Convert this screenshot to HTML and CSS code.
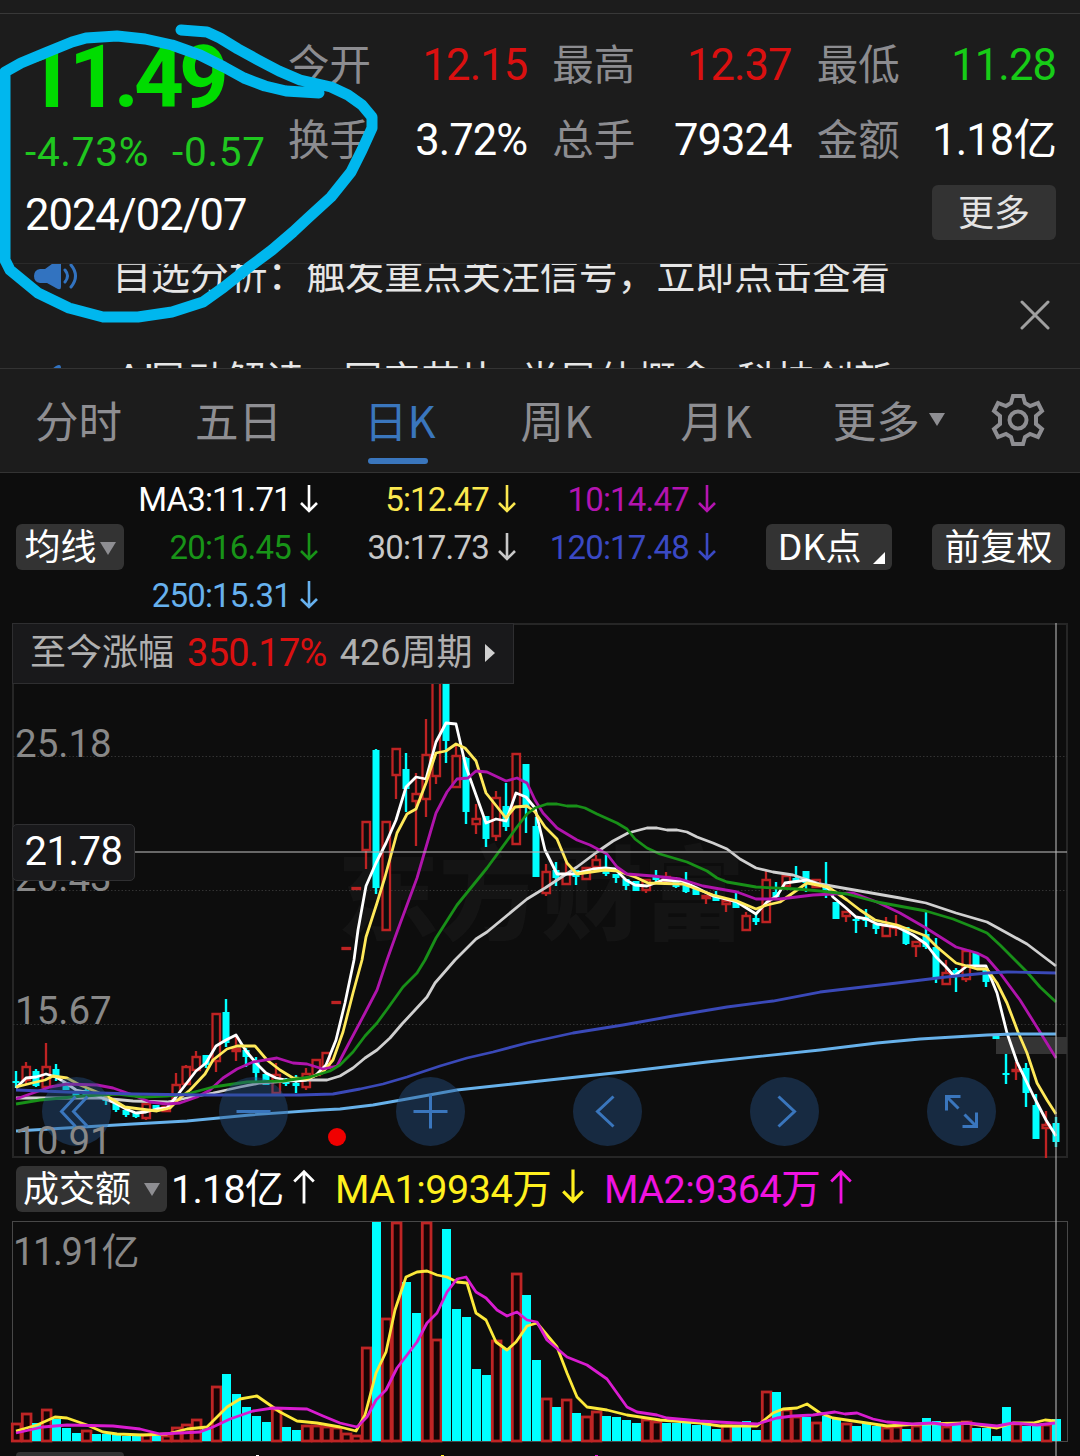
FILE: index.html
```
<!DOCTYPE html>
<html lang="zh-CN">

<head>
    <meta charset="UTF-8">
    <meta name="viewport" content="width=device-width, initial-scale=1.0">
    <title>日K</title>
    <link rel="stylesheet" href="styles.css">
</head>

<body>
    <div class="top-line"></div>

    <section class="quote">
        <div class="quote-main">
            <div class="price">11.49</div>
            <div class="change"><span>-4.73%</span><span>-0.57</span></div>
            <div class="date">2024/02/07</div>
        </div>
        <div class="quote-side">
            <div class="stats">
                <div class="stat"><span class="label">今开</span><span class="value up">12.15</span></div>
                <div class="stat"><span class="label">最高</span><span class="value up">12.37</span></div>
                <div class="stat"><span class="label">最低</span><span class="value down">11.28</span></div>
                <div class="stat"><span class="label">换手</span><span class="value">3.72%</span></div>
                <div class="stat"><span class="label">总手</span><span class="value">79324</span></div>
                <div class="stat"><span class="label">金额</span><span class="value">1.18亿</span></div>
            </div>
            <button class="more">更多</button>
        </div>
    </section>

    <section class="ticker">
        <div class="ticker-list">
            <div class="ticker-row">
                <svg class="speaker" width="44" height="36" viewBox="0 0 44 36">
                    <path d="M6 10h5l11-8q5-3 5 2v24q0 4-5 1l-9-5H6q-6-1-6-7t6-7z" fill="#3273c0"/>
                    <path d="M31 11q5 6 0 12M37 6q9 11 0 22" fill="none" stroke="#3273c0" stroke-width="3" stroke-linecap="round"/>
                </svg>
                <span class="text">自选分析：触发重点关注信号，立即点击查看</span>
            </div>
            <div class="ticker-row">
                <svg class="speaker" width="44" height="36" viewBox="0 0 44 36">
                    <path d="M6 10h5l11-8q5-3 5 2v24q0 4-5 1l-9-5H6q-6-1-6-7t6-7z" fill="#3273c0"/>
                </svg>
                <span class="text spaced"><span class="latin">AI</span>异动解读：国产芯片 半导体概念 科技创新</span>
            </div>
        </div>
        <svg class="close" width="30" height="30" viewBox="0 0 30 30">
            <path d="M2 2L28 28M28 2L2 28" stroke="#a0a0a0" stroke-width="3" stroke-linecap="round"/>
        </svg>
    </section>

    <nav class="tabs">
        <span class="tab">分时</span>
        <span class="tab">五日</span>
        <span class="tab active">日K</span>
        <span class="tab">周K</span>
        <span class="tab">月K</span>
        <span class="tab">更多<i class="caret"></i></span>
        <svg class="gear" width="54" height="54" viewBox="-27 -27 54 54" fill="none" stroke="#8e8e92" stroke-width="4">
            <path d="M-5-24H5L7-17L12-14L20-17L24-9L18-4V4L24 9L20 17L12 14L7 17L5 24H-5L-7 17L-12 14L-20 17L-24 9L-18 4V-4L-24-9L-20-17L-12-14L-7-17Z"/>
            <circle r="8.5"/>
        </svg>
    </nav>

    <section class="ma-bar">
        <button class="chip ma-type">均线<i class="caret"></i></button>
        <div class="ma-grid">
            <span class="ma3">MA3:11.71<svg class="arrow"><use href="#down"/></svg></span>
            <span class="ma5">5:12.47<svg class="arrow"><use href="#down"/></svg></span>
            <span class="ma10">10:14.47<svg class="arrow"><use href="#down"/></svg></span>
            <span class="ma20">20:16.45<svg class="arrow"><use href="#down"/></svg></span>
            <span class="ma30">30:17.73<svg class="arrow"><use href="#down"/></svg></span>
            <span class="ma120">120:17.48<svg class="arrow"><use href="#down"/></svg></span>
            <span class="ma250">250:15.31<svg class="arrow"><use href="#down"/></svg></span>
        </div>
        <button class="chip dk">DK点<i class="corner"></i></button>
        <button class="chip adjust">前复权</button>
    </section>

    <div class="charts">
        <section class="price-chart">
            <svg id="price" width="1080" height="535" viewBox="0 623 1080 535"></svg>
            <div class="range-tip">
                <span>至今涨幅</span><span class="up">350.17%</span><span>426周期</span><i class="play"></i>
            </div>
            <div class="cursor-price">21.78</div>
        </section>

        <div class="vol-head">
            <button class="chip vol-type">成交额<i class="caret"></i></button>
            <span class="vol-now">1.18亿<svg class="arrow big"><use href="#up"/></svg></span>
            <span class="vol-ma1">MA1:9934万<svg class="arrow big"><use href="#down"/></svg></span>
            <span class="vol-ma2">MA2:9364万<svg class="arrow big"><use href="#up"/></svg></span>
        </div>

        <svg id="volume" width="1080" height="224" viewBox="0 1220 1080 224"></svg>

        <div class="next-head">
            <div class="next-chip"></div>
            <i class="tick white"></i><i class="tick yellow"></i><i class="tick pink"></i>
        </div>
        <div class="crosshair"></div>
    </div>

    <!-- hand-drawn marker -->
    <svg class="marker" width="400" height="340" viewBox="0 0 400 340">
        <path d="M181 30L207 32L220 38L238 49L258 60L279 71L300 80L331 87L348 95L362 105L372 117L372 128L362 150L351 172L331 197L308 218L293 232L272 250L248 268L224 287L203 302L172 312L138 317L103 317L69 308L38 293L10 270L5 260V72L21 63L45 53L72 42L86 38L117 36L145 39L172 45L200 55L224 67L244 78L265 86L286 91L319 93"/>
    </svg>

    <!-- shared arrows -->
    <svg class="defs">
        <symbol id="down" viewBox="0 0 18 28"><path d="M9 0V26M1 18L9 26L17 18" fill="none" stroke="currentColor" stroke-width="2.6"/></symbol>
        <symbol id="up" viewBox="0 0 18 28"><path d="M9 28V2M1 10L9 2L17 10" fill="none" stroke="currentColor" stroke-width="2.3"/></symbol>
    </svg>

    <script src="chart.js"></script>
</body>

</html>
```

FILE: styles.css
```
* {
    box-sizing: border-box;
}

body {
    margin: 0;
    width: 1080px;
    height: 1456px;
    overflow: hidden;
    position: relative;
    background: #1c1c1c;
    color: #fff;
    font-family: "Noto Sans CJK SC", sans-serif;
}

button {
    border: 0;
    padding: 0;
    font-family: inherit;
    color: #fff;
}

svg {
    display: block;
    flex: none;
}

i {
    display: block;
}

.defs {
    position: absolute;
    width: 0;
    height: 0;
}

/* numbers */

.quote-main,
.value,
.ma-grid,
.range-tip,
.cursor-price,
.vol-head span,
.latin,
.axis {
    font-family: Roboto, "Noto Sans CJK SC", sans-serif;
}

.up {
    color: #da1010;
}

.down {
    color: #17cc17;
}

.top-line {
    height: 14px;
    border-bottom: 1px solid #383838;
}

/* quote */

.quote {
    display: flex;
    height: 249px;
    padding: 0 24px 0 25px;
}

.quote-main {
    width: 263px;
    white-space: nowrap;
}

.price {
    margin: 27px 0 0 -1px;
    font-size: 87px;
    line-height: 72px;
    font-weight: 700;
    letter-spacing: -5px;
    color: #00dc00;
}

.change {
    display: flex;
    gap: 23px;
    margin-top: 16px;
    font-size: 40.5px;
    line-height: 47px;
    letter-spacing: .7px;
    color: #1fc71f;
}

.date {
    margin-top: 15px;
    font-size: 43.5px;
    line-height: 50px;
    letter-spacing: -1px;
}

.quote-side {
    flex: 1;
    padding-top: 10px;
    display: flex;
    flex-direction: column;
    align-items: flex-end;
}

.stats {
    width: 100%;
    display: grid;
    grid-template-columns: repeat(3, 1fr);
    column-gap: 25px;
}

.stat {
    display: flex;
    justify-content: space-between;
    height: 75px;
}

.stat .label {
    font-size: 41.5px;
    line-height: 77px;
    color: #8c8c90;
}

.stat .value {
    padding-top: 8px;
    font-size: 43.5px;
    line-height: 68px;
    letter-spacing: -.9px;
}

.more {
    width: 124px;
    height: 55px;
    margin-top: 11px;
    padding-bottom: 4px;
    border-radius: 6px;
    background: #333;
    color: #e4e4e4;
    font-size: 36px;
    line-height: 51px;
}

/* ticker */

.ticker {
    height: 105px;
    border-top: 1px solid #2a2a2a;
    display: flex;
    justify-content: space-between;
    padding: 0 30px 0 34px;
    overflow: hidden;
}

.ticker-row {
    display: flex;
    align-items: flex-start;
    height: 105px;
    font-size: 38.9px;
    line-height: 56px;
    color: #e6e6e6;
    white-space: nowrap;
    margin-top: -20px;
    margin-bottom: 20px;
}

.ticker-row .text {
    margin-left: 34px;
}

.ticker-row .spaced {
    margin-left: 37px;
    word-spacing: 13px;
}

.latin {
    display: inline-block;
    font-size: 43px;
    width: 34px;
}

.speaker {
    margin-top: 15px;
}

.close {
    margin-top: 36px;
}

/* tabs */

.tabs {
    height: 105px;
    border-top: 1px solid #333;
    border-bottom: 1px solid #333;
    display: flex;
    padding-left: 35px;
    font-size: 43.5px;
    line-height: 101px;
    color: #8e8e92;
}

.tab {
    margin-right: 73px;
    display: flex;
    position: relative;
    white-space: nowrap;
}

.tab:nth-child(2) {
    margin-right: 82px;
}

.tab:nth-child(3) {
    margin-right: 85px;
}

.tab:nth-child(4) {
    margin-right: 88px;
}

.tab:nth-child(5) {
    margin-right: 81px;
}

.tab:nth-child(6) {
    margin-right: 46px;
}

.tab.active {
    color: #3a76bd;
}

.tab.active::after {
    content: "";
    position: absolute;
    left: 4px;
    bottom: 8px;
    width: 60px;
    height: 6px;
    border-radius: 3px;
    background: #3a76bd;
}

.caret {
    border: 8px solid transparent;
    border-top: 13px solid #8e8e92;
    border-bottom: 0;
}

.tab .caret {
    margin: 44px 0 0 9px;
}

.gear {
    margin-top: 24px;
}

/* moving averages */

.ma-bar {
    height: 150px;
    background: #0d0d0d;
    display: flex;
    align-items: flex-start;
    padding-left: 16px;
}

.chip {
    height: 46px;
    border-radius: 6px;
    background: #333;
    font-size: 36px;
    line-height: 41px;
    padding-bottom: 5px;
    display: flex;
    justify-content: center;
    white-space: nowrap;
}

.ma-bar .chip {
    margin-top: 51px;
}

.ma-type {
    width: 108px;
}

.ma-type .caret {
    margin: 18px 0 0 3px;
}

.ma-grid {
    display: grid;
    grid-template-columns: 194px 198px 200px;
    padding-top: 3px;
    font-size: 33px;
    line-height: 48px;
    letter-spacing: -.8px;
    width: 642px;
}

.ma-grid span {
    display: flex;
    justify-content: flex-end;
    white-space: nowrap;
}

.arrow {
    width: 18px;
    height: 28px;
    margin: 9px 0 0 9px;
}

.arrow.big {
    width: 22px;
    height: 35px;
    margin: 8px 0 0 auto;
}

.ma3 { color: #fff; }
.ma5 { color: #fbe84f; }
.ma10 { color: #b414b0; }
.ma20 { color: #189418; }
.ma30 { color: #c8c8c8; }
.ma120 { color: #3a49c4; }
.ma250 { color: #67b1ee; }

.dk {
    width: 126px;
    padding-left: 4px;
}

.corner {
    margin: 28px 0 0 11px;
    border-left: 12px solid transparent;
    border-bottom: 12px solid #fff;
    height: 0;
}

.adjust {
    width: 133px;
    margin-left: 40px;
}

/* charts */

.charts {
    background: #0d0d0d;
    height: 833px;
    position: relative;
}

.price-chart {
    position: relative;
}

.range-tip {
    position: absolute;
    left: 12px;
    top: 0;
    width: 502px;
    height: 61px;
    padding-left: 17px;
    border: 1px solid #2e2e30;
    background: #19191b;
    color: #b0b0b0;
    display: flex;
    font-size: 36px;
    line-height: 59px;
}

.range-tip span {
    margin-right: 13px;
    white-space: nowrap;
}

.range-tip .up {
    font-size: 38px;
    letter-spacing: -.7px;
}

.play {
    margin-top: 20px;
    height: 18px;
    border: 9px solid transparent;
    border-left: 10px solid #d0d0d0;
    border-right: 0;
}

.cursor-price {
    position: absolute;
    left: 12px;
    top: 201px;
    width: 123px;
    height: 57px;
    border: 1px solid #303032;
    border-radius: 5px;
    background: #19191b;
    font-size: 40px;
    line-height: 54px;
    letter-spacing: -.5px;
    text-align: center;
}

.vol-head {
    display: flex;
    height: 62px;
    padding: 0 0 0 16px;
}

.vol-head span {
    display: flex;
    padding-top: 3px;
    margin-right: 20px;
    font-size: 39.5px;
    line-height: 57px;
    letter-spacing: -.5px;
    white-space: nowrap;
}

.vol-type {
    width: 151px;
    margin: 8px 4px 0 0;
}

.vol-type .caret {
    margin: 17px 0 0 13px;
}

.vol-head .vol-now {
    width: 144px;
    letter-spacing: -.8px;
}

.vol-ma1 {
    width: 249px;
    color: #fff01e;
}

.vol-ma2 {
    width: 248px;
    color: #f012e0;
}

.next-head {
    display: flex;
    align-items: flex-end;
    height: 12px;
    padding-left: 16px;
}

.next-chip {
    width: 108px;
    height: 4px;
    border-radius: 6px 6px 0 0;
    background: #333;
}

.tick {
    width: 3px;
    height: 1px;
    margin-left: 132px;
}

.tick.white { background: #fff; }
.tick.yellow { background: #fff01e; margin-left: 182px; }
.tick.pink { background: #f012e0; margin-left: 151px; }

.crosshair {
    position: absolute;
    left: 1055px;
    top: 0;
    width: 2px;
    height: 833px;
    background: #b4b4b4;
    opacity: .55;
}

.marker {
    position: absolute;
    left: 0;
    top: 0;
    fill: none;
    stroke: #00b7ee;
    stroke-width: 11;
    stroke-linejoin: round;
    stroke-linecap: round;
}

/* svg parts */

.frame { fill: none; stroke: #262626; stroke-width: 2; }
.vol-frame { fill: none; stroke: #484848; stroke-width: 1; }
.grid { stroke: #333; stroke-dasharray: 1.5 2; }
.axis { fill: #888; font-size: 38.5px; }
.axis.small { font-size: 38px; letter-spacing: -1.4px; }
.watermark { fill: #141414; font-size: 102px; font-weight: 900; }
.rise { fill: #0d0d0d; stroke: #be2323; stroke-width: 2.3; }
.fall { fill: #00ffff; }
.vol-rise { fill: #170404; stroke: #be2525; stroke-width: 2.8; }
.line { fill: none; stroke-width: 2.8; stroke-linejoin: round; }
.tool circle { fill: #25538a; fill-opacity: .42; }
.tool path { fill: none; stroke: #3a76bd; stroke-width: 3; }
```

FILE: chart.js
```
// y values are screen pixels, one column every 10px starting at x = 16
// candle: direction, high, body top, body bottom, low
const candles = `
f 1071 1081 1083 1088,r 1062 1067 1080 1084,f 1069 1071 1086 1087,r 1043 1067 1087 1087,f 1064 1069 1076 1081,
f 1082 1082 1090 1090,f 1093 1093 1096 1099,f 1088 1090 1096 1097,f 1092 1092 1097 1098,f 1096 1096 1101 1105,
f 1103 1103 1110 1112,f 1110 1110 1115 1117,f 1113 1113 1117 1118,r 1104 1104 1118 1120,f 1105 1105 1109 1109,
r 1107 1107 1111 1111,r 1073 1085 1100 1100,r 1065 1067 1084 1084,r 1051 1057 1070 1072,f 1055 1055 1065 1068,
r 1014 1014 1061 1072,f 999 1012 1043 1047,r 1036 1049 1051 1061,f 1048 1050 1057 1067,f 1057 1062 1073 1081,
f 1074 1074 1085 1085,r 1063 1075 1093 1093,f 1078 1081 1084 1086,f 1075 1083 1086 1093,r 1068 1074 1087 1090,
r 1060 1060 1075 1075,r 1053 1053 1068 1068,r 1002 1002 1003 1003,r 948 948 949 949,r 888 888 889 889,
r 822 822 850 869,f 749 750 888 894,r 822 822 930 930,r 749 749 775 799,f 753 769 789 812,
r 773 794 801 846,r 719 755 799 817,r 640 640 776 784,f 640 640 741 763,r 746 756 787 787,
f 757 758 812 824,r 804 819 824 834,f 816 816 839 847,r 791 798 836 841,f 783 806 827 831,
r 754 754 844 844,f 764 764 808 833,f 817 826 877 877,r 864 872 893 896,f 862 870 878 886,
r 860 874 884 884,f 870 870 877 885,r 867 868 879 879,r 855 860 867 867,f 855 868 874 876,
f 874 874 878 883,f 879 879 886 890,f 881 881 891 891,r 880 880 890 893,f 870 877 880 883,
r 872 877 881 881,f 877 881 887 888,f 872 882 892 893,f 888 888 895 895,r 895 896 898 904,
f 891 896 901 901,r 900 901 904 912,f 893 902 908 908,r 912 916 930 931,f 915 918 922 925,
r 871 880 922 923,f 882 892 897 897,r 875 876 886 887,f 866 878 882 882,f 871 871 883 892,
r 879 880 887 888,f 862 884 890 898,f 902 902 919 919,r 911 912 916 922,f 917 919 921 933,
f 909 917 921 927,f 924 924 929 934,r 917 926 936 937,r 915 926 928 936,f 927 927 944 945,
r 941 942 946 957,f 912 934 947 949,f 938 947 979 983,r 960 973 984 984,f 968 970 975 992,
r 950 951 979 982,f 952 953 967 967,f 970 970 982 987,f 1036 1036 1039 1039,f 1054 1073 1075 1084,
r 1062 1070 1071 1080,f 1063 1068 1093 1107,f 1094 1105 1139 1139,r 1111 1125 1128 1158,f 1117 1123 1142 1147`;

const volumes = `
r1423 r1413 f1423 r1409 f1419 f1428 f1433 r1430 f1434 f1434 f1434 f1436 f1435 r1434 f1436 r1435 r1427 r1424 r1419 f1429
r1386 f1374 f1394 f1407 f1416 f1422 r1409 f1427 f1430 r1425 r1425 r1426 r1427 r1433 r1435 r1347 f1222 r1318 r1222 f1282
f1313 r1222 r1339 f1229 f1309 f1317 f1369 f1375 r1340 f1348 r1273 f1295 f1360 r1398 f1407 r1399 f1413 r1416 r1411 f1416
f1417 f1420 f1423 r1419 r1421 f1423 f1423 f1422 f1425 f1424 f1429 r1425 f1426 f1421 f1430 r1391 f1392 r1409 r1416 f1417
r1422 f1416 f1419 r1423 f1426 f1423 f1426 r1427 r1426 f1429 r1425 f1418 f1421 r1426 f1425 r1421 f1428 f1428 f1436 f1407
r1423 f1426 f1426 r1424 f1419`;

const priceLines = [
    ['#d0d0d0', '16,1098 100,1098 133,1101 167,1102 187,1098 213,1093 240,1087 260,1083 300,1080 327,1080 340,1076 353,1068 365,1058 377,1050 390,1038 402,1024 415,1010 427,997 435,983 455,960 476,939 487,932 527,899 545,888 577,867 597,852 613,841 628,833 647,828 657,828 667,830 677,830 687,832 697,837 713,843 727,849 740,859 756,868 773,872 793,875 820,884 860,891 900,898 926,903 956,913 987,922 1007,933 1027,944 1056,966'],
    ['#fff', '16,1088 26,1078 36,1077 46,1074 56,1077 66,1083 76,1090 86,1092 100,1097 115,1103 126,1109 136,1113 146,1112 157,1109 167,1108 176,1097 186,1084 196,1071 206,1063 216,1046 226,1040 236,1035 246,1051 256,1063 266,1073 276,1078 286,1080 296,1081 306,1080 316,1075 326,1065 336,1040 345,1003 354,960 358,930 366,886 376,863 386,843 396,820 406,787 416,777 426,779 436,742 446,723 456,724 466,767 476,795 486,823 496,819 506,821 516,793 526,797 535,808 545,850 557,874 573,874 593,869 605,868 615,869 626,880 635,885 647,886 663,880 682,881 697,888 713,896 737,902 756,914 767,902 777,896 785,883 807,880 817,884 828,888 833,897 846,908 856,917 867,919 877,924 897,927 913,935 926,944 936,957 946,967 954,976 967,966 986,966 997,993 1007,1033 1017,1062 1033,1095 1046,1120 1056,1136'],
    ['#ffe95a', '16,1087 32,1083 45,1080 53,1076 67,1078 80,1085 97,1092 110,1098 125,1107 140,1109 157,1111 170,1108 180,1098 190,1090 205,1074 213,1060 227,1049 237,1046 255,1046 267,1060 280,1070 293,1078 307,1079 322,1073 333,1060 343,1032 353,993 362,960 366,937 377,903 385,877 397,833 407,814 416,809 426,783 436,753 446,751 456,744 465,748 476,761 486,793 506,818 515,807 527,806 535,812 545,827 557,839 567,863 577,874 605,870 618,871 635,877 648,883 683,884 713,895 737,901 756,909 767,905 780,902 790,895 807,883 828,887 847,900 860,910 875,920 897,925 926,936 937,947 956,963 967,966 977,969 987,969 997,983 1007,1003 1018,1032 1027,1053 1037,1083 1047,1100 1056,1114'],
    ['#b014ac', '16,1099 33,1093 50,1087 67,1084 97,1085 113,1088 133,1095 150,1102 167,1104 180,1103 197,1097 210,1090 223,1078 237,1069 253,1062 277,1058 293,1063 307,1064 323,1069 337,1066 348,1045 365,1013 377,990 387,960 397,932 417,878 436,813 447,792 457,779 468,778 476,771 487,772 506,781 517,778 527,783 535,800 543,813 557,828 577,840 590,845 607,854 617,867 627,874 653,876 680,879 703,886 737,892 756,899 780,899 813,895 853,893 877,902 900,913 926,928 956,947 977,953 987,958 1000,973 1020,1000 1040,1032 1056,1058'],
    ['#189018', '16,1104 40,1100 83,1096 117,1094 143,1097 167,1096 187,1094 213,1087 247,1082 283,1081 310,1077 330,1071 340,1065 353,1052 365,1036 377,1023 388,1008 403,987 417,973 425,960 436,938 457,905 487,868 517,827 527,814 535,808 547,804 557,804 567,806 577,806 585,808 597,814 617,823 627,829 635,839 647,848 660,854 687,862 707,871 717,878 727,882 756,887 797,889 820,891 847,894 877,902 926,911 953,919 973,927 987,933 1000,945 1027,972 1040,987 1056,1002'],
    ['#3a49b8', '16,1090 43,1091 67,1092 100,1093 133,1094 200,1095 300,1095 333,1094 360,1089 383,1084 407,1077 440,1066 467,1058 493,1052 527,1043 573,1033 623,1025 673,1016 727,1007 773,1001 820,992 897,983 946,977 987,973 1007,972 1056,973'],
    ['#67b1ea', '16,1131 133,1124 187,1121 250,1115 320,1110 340,1109 373,1105 407,1099 457,1090 540,1081 623,1072 707,1062 820,1050 877,1043 920,1039 987,1035 1013,1034 1056,1034']
];

const volumeLines = [
    ['#fce93a', '16,1431 37,1425 55,1417 67,1418 87,1425 103,1432 117,1434 143,1435 167,1434 187,1429 207,1427 227,1407 240,1399 257,1396 280,1412 297,1421 317,1423 340,1427 356,1431 365,1415 376,1373 386,1352 395,1310 406,1277 417,1272 427,1271 437,1275 447,1277 457,1282 467,1283 476,1313 486,1320 496,1342 507,1350 516,1342 527,1326 537,1323 557,1347 567,1373 577,1397 587,1407 607,1410 627,1415 660,1420 700,1423 720,1426 757,1426 773,1413 783,1409 797,1408 807,1404 820,1413 833,1418 860,1422 887,1426 920,1424 967,1423 997,1428 1013,1423 1033,1423 1045,1420 1055,1421'],
    ['#d91cd0', '16,1433 43,1427 67,1425 113,1426 140,1429 160,1434 200,1432 213,1427 230,1419 253,1411 273,1408 307,1409 323,1416 340,1423 357,1427 367,1417 376,1400 386,1390 397,1368 417,1342 427,1323 437,1313 447,1292 457,1279 466,1277 476,1292 486,1298 497,1310 507,1316 517,1312 527,1320 537,1322 547,1340 567,1357 587,1365 607,1379 627,1407 637,1412 657,1415 667,1418 700,1421 717,1422 757,1424 777,1418 793,1416 813,1415 835,1412 845,1414 857,1413 873,1419 887,1422 913,1424 933,1423 947,1425 967,1423 997,1426 1013,1423 1037,1425 1055,1423']
];

function drawLines(lines) {
    return lines.map(([color, points]) => `<polyline class="line" stroke="${color}" points="${points}"/>`).join('');
}

function drawCandle(text, i) {
    const [dir, ...values] = text.trim().split(' ');
    const [high, top, bottom, low] = values.map(Number);
    const x = 16 + i * 10;
    if (dir === 'f') {
        return `<rect class="fall" x="${x - 1.2}" y="${high}" width="2.4" height="${low - high}"/>
            <rect class="fall" x="${x - 3.5}" y="${top}" width="7" height="${bottom - top}"/>`;
    }
    return `<path class="rise" d="M${x} ${high}V${top}M${x} ${bottom}V${low}M${x - 3.5} ${top}H${x + 4}V${bottom}H${x - 3.5}Z"/>`;
}

function drawVolume(text, i) {
    const x = 16 + i * 10;
    const y = Number(text.slice(1));
    if (text[0] === 'f') {
        return `<rect class="fall" x="${x - 4}" y="${y}" width="9" height="${1441 - y}"/>`;
    }
    return `<rect class="vol-rise" x="${x - 3.7}" y="${y + 1}" width="8.7" height="${1440 - y}"/>`;
}

// price chart
const tools = [
    'M-1 -15L-15 0L-1 15M11 -15L-3 0L11 15',
    'M-17 0H17',
    'M-17 0H17M0 -17V17',
    'M6 -15L-10 0L6 15',
    'M-6 -15L10 0L-6 15',
    'M-15 -1V-15H-1M-15 -15L-3 -3M15 1V15H1M15 15L3 3'
];

document.getElementById('price').innerHTML = `
    <text class="watermark" x="337" y="932">东方财富</text>
    <rect class="frame" x="13" y="624" width="1054" height="533"/>
    <path class="grid" d="M13 756.5H1067M13 890.5H1067M13 1024.5H1067"/>
    <rect x="996" y="1037" width="71" height="17" fill="#343434"/>
    ${candles.split(',').map(drawCandle).join('')}
    ${drawLines(priceLines)}
    <rect x="134" y="851" width="933" height="2" fill="#b4b4b4" fill-opacity=".55"/>
    ${tools.map((d, i) => `<g class="tool" transform="translate(${76.5 + i * 177} 1111.5)"><circle r="34.5"/><path d="${d}"/></g>`).join('')}
    <text class="axis" x="15" y="757">25.18</text>
    <text class="axis" x="15" y="891">20.43</text>
    <text class="axis" x="15" y="1024">15.67</text>
    <text class="axis" x="15" y="1154">10.91</text>
    <circle cx="337" cy="1137" r="9" fill="#f00000"/>`;

// volume chart
document.getElementById('volume').innerHTML = `
    <rect class="vol-frame" x="12.5" y="1221.5" width="1055" height="220"/>
    ${volumes.trim().split(/\s+/).map(drawVolume).join('')}
    ${drawLines(volumeLines)}
    <text class="axis small" x="13" y="1265">11.91亿</text>`;
```
